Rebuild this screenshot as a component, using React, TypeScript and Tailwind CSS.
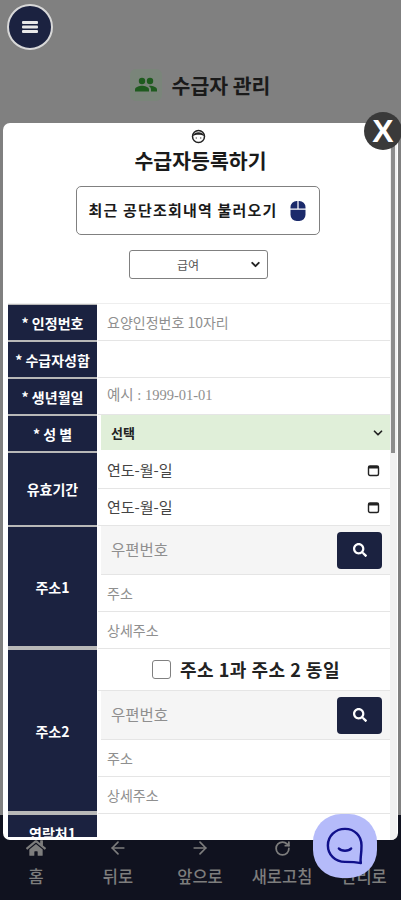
import React from "react";
import { ArrowLeft, ArrowRight, RotateCw, ChevronDown } from "lucide-react";
import { FaHome, FaSearch, FaMouse } from "react-icons/fa";

const font = { fontFamily: '"Noto Sans CJK KR", "Liberation Sans", sans-serif' };
const serif = { fontFamily: '"Liberation Serif","Noto Sans CJK KR",serif' };

function Label({ children, bottom = "pb-[1px]", align = "items-center" }: { children: React.ReactNode; bottom?: string; align?: string }) {
  return (
    <div className={`w-[89px] shrink-0 bg-[#b8b8b8] pt-[1px] ${bottom}`}>
      <div className={`h-full bg-[#1b2240] text-white text-[14px] font-bold flex ${align} justify-center leading-none whitespace-nowrap`}>
        {children}
      </div>
    </div>
  );
}

function Row({ h, children }: { h: string; children: React.ReactNode }) {
  return <div className={`flex gap-[1px] ${h} bg-white shrink-0`}>{children}</div>;
}

function Cell({ children }: { children?: React.ReactNode }) {
  return (
    <div className="h-[37px] border-b border-[#e5e5e5] flex items-center pl-[9px] text-[14px] text-[#8f8f8f] shrink-0">
      {children}
    </div>
  );
}

function CalendarIcon() {
  return (
    <svg width="13" height="13" viewBox="0 0 13 13" fill="none">
      <rect x="1.500" y="2" width="10" height="9.500" rx="1.500" stroke="#222" strokeWidth="1.400" />
      <rect x="1.500" y="2" width="10" height="2.500" fill="#222" />
    </svg>
  );
}

function DateCell() {
  return (
    <div className="h-[37px] border-b border-[#e5e5e5] flex items-center justify-between pl-[9px] pr-[10px] text-[15px] text-[#444] shrink-0">
      <span>연도-월-일</span>
      <CalendarIcon />
    </div>
  );
}

function Zip() {
  return (
    <div className="h-[49px] bg-[#f5f5f5] border-b border-[#e5e5e5] ml-[3px] flex items-center justify-between pl-[10px] pr-[8px] shrink-0">
      <span className="text-[15.500px] text-[#8f8f8f]">우편번호</span>
      <div className="w-[45px] h-[37px] bg-[#1b2240] rounded-[4px] flex items-center justify-center">
        <FaSearch size={14} color="#fff" />
      </div>
    </div>
  );
}

function NavItem({ icon, label }: { icon: React.ReactNode; label: string }) {
  return (
    <div className="w-[82px] shrink-0 flex flex-col items-center gap-[8px] text-[#7d7d7d] text-[16.500px] font-medium leading-[20px]">
      <div className="h-[20px] flex items-center">{icon}</div>
      <span className="whitespace-nowrap">{label}</span>
    </div>
  );
}

export default function App() {
  return (
    <div className="relative w-[401px] h-[900px] overflow-hidden bg-[#808080] flex flex-col" style={font}>
      <div className="flex-1 flex flex-col">
        <div className="pl-[7px] pt-[4px]">
          <div className="w-[46px] h-[46px] rounded-full bg-[#1b2240] border-2 border-[#d8d8d8] flex items-center justify-center">
            <svg width="16" height="12" viewBox="0 0 16 12" fill="#e8e8e8">
              <rect x="0" y="0" width="16" height="3" rx="1" />
              <rect x="0" y="4.500" width="16" height="3" rx="1" />
              <rect x="0" y="9" width="16" height="3" rx="1" />
            </svg>
          </div>
        </div>
        <div className="flex items-center justify-center gap-[10px] mt-[19px] pr-[1px]">
          <div className="w-[32px] h-[32px] rounded-[6px] bg-[#7a857a] flex items-center justify-center">
            <svg width="24" height="24" viewBox="0 0 24 24" fill="#1e5b1e">
              <circle cx="8" cy="8" r="3.200" />
              <circle cx="16" cy="8" r="3.200" />
              <path d="M1 18.500V16.500C1 14 5.500 12.800 8 12.800C10.500 12.800 15 14 15 16.500V18.500Z" />
              <path d="M16 12.800C15.600 12.800 15.200 12.800 14.800 12.900C16.200 13.800 17 15 17 16.500V18.500H23V16.500C23 14 18.500 12.800 16 12.800Z" />
            </svg>
          </div>
          <span className="text-[20.500px] font-bold text-[#1a1a1a] whitespace-nowrap">수급자 관리</span>
        </div>
      </div>

      <div className="h-[85px] bg-[#10121f] flex items-start pt-[23px] -mx-[5px] shrink-0">
        <NavItem icon={<FaHome size={20} />} label="홈" />
        <NavItem icon={<ArrowLeft size={20} strokeWidth={2} />} label="뒤로" />
        <NavItem icon={<ArrowRight size={20} strokeWidth={2} />} label="앞으로" />
        <NavItem icon={<RotateCw size={17} strokeWidth={2.500} />} label="새로고침" />
        <NavItem icon={<span />} label="관리로" />
      </div>

      {/* modal */}
      <div className="absolute left-[3px] top-[123px] w-[395px] h-[717px] bg-white rounded-[7px] overflow-hidden flex flex-col">
        <div className="flex flex-col items-center shrink-0 pr-[5px]">
          <svg width="15" height="16" viewBox="0 0 15 16" className="mt-[5px]" fill="none">
            <circle cx="7.500" cy="8.500" r="6" stroke="#222" strokeWidth="1.500" />
            <path d="M1.800 8C3 3 12 3 13.200 8C10 6.300 5 6.300 1.800 8Z" fill="#222" />
            <circle cx="5.300" cy="10" r="0.800" fill="#666" />
            <circle cx="9.700" cy="10" r="0.800" fill="#666" />
          </svg>
          <div className="text-[20.500px] font-bold text-[#1a1a1a] leading-[28px] mt-[2px] ml-[5px]">수급자등록하기</div>
          <div className="mt-[12px] w-[244px] h-[49px] border border-[#808080] rounded-[5px] flex items-center justify-center gap-[10px] text-[15px] tracking-[1.200px] font-bold text-[#1a1a1a] whitespace-nowrap">
            <span>최근 공단조회내역 불러오기</span>
            <FaMouse size={20} color="#1b2a6b" />
          </div>
          <div className="mt-[15px] w-[139px] h-[29px] border border-[#808080] rounded-[3px] flex items-center relative text-[12px] text-[#555]">
            <span className="w-full text-center pr-[20px]">급여</span>
            <ChevronDown size={13} strokeWidth={3.500} color="#222" className="absolute right-[5px]" />
          </div>
        </div>

        <div className="flex-1 min-h-0 mt-[24px] ml-[5px] w-[382px] overflow-hidden flex flex-col bg-white border-t border-[#eee] mb-[3px]">
          <Row h="h-[37px]">
            <Label>* 인정번호</Label>
            <div className="flex-1 border-b border-[#e5e5e5] flex items-center pl-[9px] text-[14px] text-[#8f8f8f]">요양인정번호 10자리</div>
          </Row>
          <Row h="h-[37px]">
            <Label>* 수급자성함</Label>
            <div className="flex-1 border-b border-[#e5e5e5]" />
          </Row>
          <Row h="h-[37px]">
            <Label>* 생년월일</Label>
            <div className="flex-1 border-b border-[#e5e5e5] flex items-center pl-[9px] text-[14.500px] text-[#8f8f8f] whitespace-nowrap" style={serif}>예시 : 1999-01-01</div>
          </Row>
          <Row h="h-[37px]">
            <Label>* 성 별</Label>
            <div className="flex-1 ml-[3px] mb-[2px] bg-[#e0efd9] flex items-center justify-between pl-[10px] pr-[5px] text-[13px] font-bold text-[#222]">
              <span>선택</span>
              <ChevronDown size={14} strokeWidth={3} color="#222" />
            </div>
          </Row>
          <Row h="h-[74px]">
            <Label>유효기간</Label>
            <div className="flex-1 flex flex-col"><DateCell /><DateCell /></div>
          </Row>
          <Row h="h-[123px]">
            <Label bottom="pb-[3px]">주소1</Label>
            <div className="flex-1 flex flex-col"><Zip /><Cell>주소</Cell><Cell>상세주소</Cell></div>
          </Row>
          <Row h="h-[165px]">
            <Label bottom="pb-[3px]">주소2</Label>
            <div className="flex-1 flex flex-col">
              <div className="h-[42px] border-b border-[#e5e5e5] flex items-center justify-center gap-[9px] pl-[4px] shrink-0">
                <div className="w-[19px] h-[19px] border border-[#808080] rounded-[3px] bg-white" />
                <span className="text-[18px] tracking-[0.500px] font-bold text-[#222] whitespace-nowrap">주소 1과 주소 2 동일</span>
              </div>
              <Zip /><Cell>주소</Cell><Cell>상세주소</Cell>
            </div>
          </Row>
          <Row h="h-[37px]">
            <Label align="items-start pt-[11px]">연락처1</Label>
            <div className="flex-1" />
          </Row>
        </div>

        {/* scrollbar */}
        <div className="absolute right-[1px] top-0 w-[7px] h-full bg-[#f1f1f1] pl-[1px]">
          <div className="w-[4px] h-[330px] bg-[#8c8c8c]" />
        </div>
      </div>

      {/* close */}
      <div className="absolute left-[364px] top-[112px] w-[38px] h-[38px] rounded-full bg-[#3a3a3a] flex items-center justify-center text-white text-[32px] font-bold leading-none" style={{ fontFamily: '"Liberation Sans",sans-serif' }}>X</div>

      {/* chat */}
      <div className="absolute left-[313px] top-[814px] w-[64px] h-[64px] rounded-[28px] bg-[#b5bbfa] flex items-center justify-center">
        <svg width="44" height="44" viewBox="0 0 36 36" fill="none" stroke="#10108a" strokeWidth="2" strokeLinecap="round" strokeLinejoin="round">
          <path d="M18 4C10 4 4 10 4 17.500C4 25 10 31 18 31C22 31 26 31 31 32C30 29 31.500 27 31.500 17.500C31.500 10 26 4 18 4Z" />
          <path d="M13 20C15 22.500 21 22.500 23 20" />
        </svg>
      </div>
    </div>
  );
}
